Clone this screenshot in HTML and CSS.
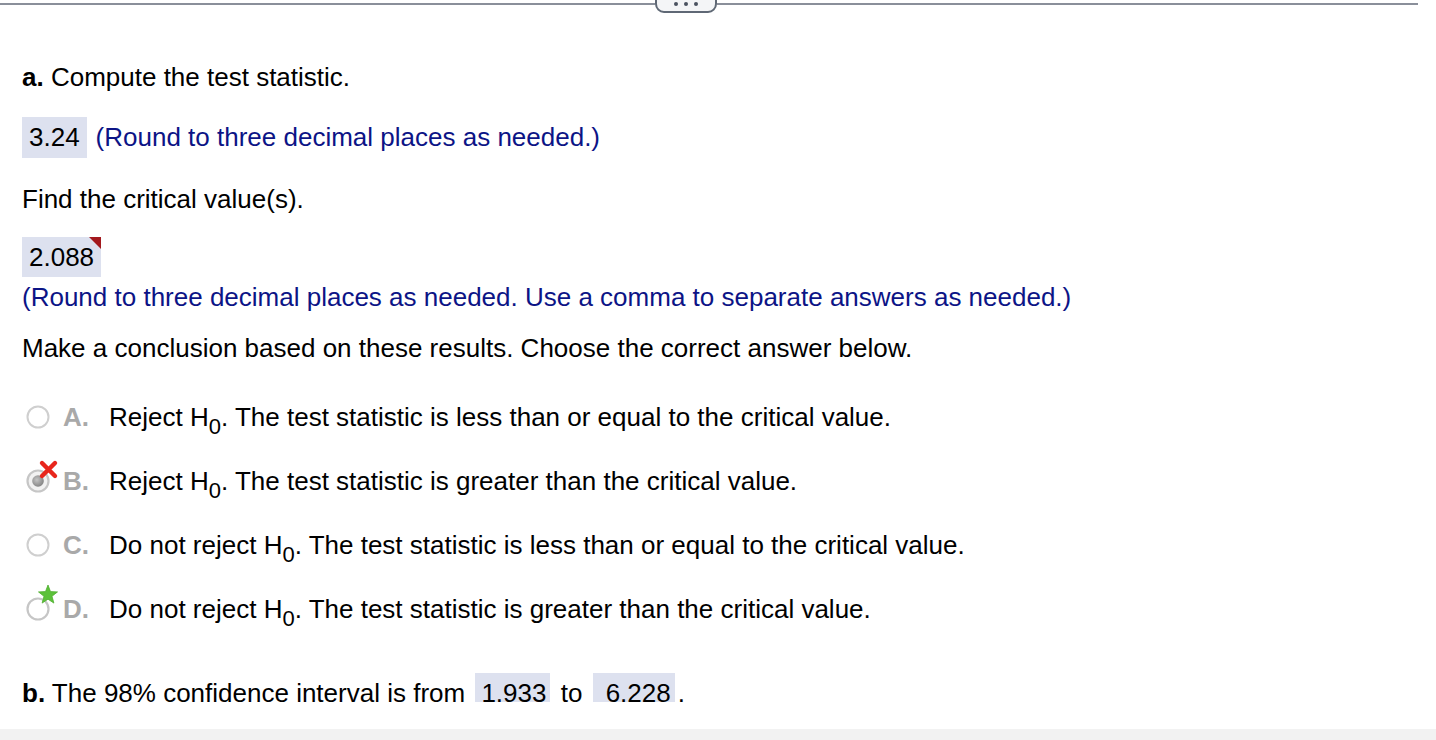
FILE: index.html
```html
<!DOCTYPE html>
<html>
<head>
<meta charset="utf-8">
<link rel="stylesheet" href="styles.css">
</head>
<body>
<div class="page">
  <div class="viewport">
    <div class="divider">
      <div class="rule rule-left"></div>
      <div class="pill"><span class="dot"></span><span class="dot"></span><span class="dot"></span></div>
      <div class="rule"></div>
    </div>
    <div class="content">
      <p class="row row-a"><b>a.</b> Compute the test statistic.</p>
      <div class="row row-ans1"><span class="ans">3.24</span><span class="hint">(Round to three decimal places as needed.)</span></div>
      <p class="row row-find">Find the critical value(s).</p>
      <div class="row row-ans2"><span class="ans ans-flag">2.088<span class="flag"></span></span></div>
      <p class="row row-hint2 hint">(Round to three decimal places as needed. Use a comma to separate answers as needed.)</p>
      <p class="row row-make">Make a conclusion based on these results. Choose the correct answer below.</p>
      <div class="options">
        <div class="option">
          <svg class="radio" width="36" height="64" viewBox="0 0 36 64">
            <circle cx="13" cy="32" r="10.5" fill="#fff" stroke="#cfcfcf" stroke-width="2"/>
          </svg>
          <span class="letter">A.</span>
          <span class="otext">Reject H<span class="sub">0</span>. The test statistic is less than or equal to the critical value.</span>
        </div>
        <div class="option">
          <svg class="radio" width="36" height="64" viewBox="0 0 36 64">
            <defs>
              <radialGradient id="dotg" cx="0.4" cy="0.4" r="0.7">
                <stop offset="0" stop-color="#c4c4c4"/>
                <stop offset="1" stop-color="#7c7c7c"/>
              </radialGradient>
            </defs>
            <circle cx="13" cy="32" r="10.5" fill="#f2f2f2" stroke="#c6c6c6" stroke-width="2.2"/>
            <circle cx="13" cy="32" r="5.8" fill="url(#dotg)"/>
            <path d="M17 14 L30 27 M30 14 L17 27" stroke="#e8261c" stroke-width="4.4" stroke-linecap="round"/>
          </svg>
          <span class="letter">B.</span>
          <span class="otext">Reject H<span class="sub">0</span>. The test statistic is greater than the critical value.</span>
        </div>
        <div class="option">
          <svg class="radio" width="36" height="64" viewBox="0 0 36 64">
            <circle cx="13" cy="32" r="10.5" fill="#fff" stroke="#cfcfcf" stroke-width="2"/>
          </svg>
          <span class="letter">C.</span>
          <span class="otext">Do not reject H<span class="sub">0</span>. The test statistic is less than or equal to the critical value.</span>
        </div>
        <div class="option">
          <svg class="radio" width="36" height="64" viewBox="0 0 36 64">
            <circle cx="13" cy="32" r="10.5" fill="#fff" stroke="#c6c6c6" stroke-width="2.2"/>
            <path d="M23 8 L25.47 14.6 L32.51 14.91 L26.99 19.3 L28.88 26.09 L23 22.2 L17.12 26.09 L19.01 19.3 L13.49 14.91 L20.53 14.6 Z" fill="#5cc13a" stroke="#4fae2f" stroke-width="0.8" stroke-linejoin="round"/>
          </svg>
          <span class="letter">D.</span>
          <span class="otext">Do not reject H<span class="sub">0</span>. The test statistic is greater than the critical value.</span>
        </div>
      </div>
      <p class="row row-b"><b>b.</b> The 98% confidence interval is from <span class="ans ans-inline">1.933</span> to <span class="ans ans-inline ans-wide">6.228</span>.</p>
    </div>
  </div>
  <div class="footer"></div>
</div>
</body>
</html>
```
FILE: styles.css
```css
html, body {
  margin: 0;
  padding: 0;
  background: #fff;
}
body {
  font-family: "Liberation Sans", Arial, Helvetica, sans-serif;
  font-size: 26px;
  color: #000;
}
.page {
  width: 1436px;
  height: 740px;
  display: flex;
  flex-direction: column;
}
.viewport {
  height: 702px;
  overflow: hidden;
}
.footer {
  margin-top: 27px;
  height: 11px;
  background: #f2f2f2;
}
.divider {
  display: flex;
  height: 13px;
  padding-right: 18px;
}
.rule {
  flex: 1;
  height: 2px;
  margin-top: 3px;
  background: #8a8f9a;
}
.rule-left {
  flex: none;
  width: 655px;
}
.pill {
  flex: none;
  width: 62px;
  height: 22px;
  margin-top: -9px;
  border: 2px solid #5f6875;
  border-radius: 9px;
  background: #f4f5f7;
  display: flex;
  justify-content: center;
  align-items: flex-end;
  gap: 6px;
  padding-bottom: 5px;
  box-sizing: border-box;
}
.dot {
  width: 4px;
  height: 4px;
  border-radius: 50%;
  background: #4a5260;
}
.content {
  padding-left: 22px;
}
.row {
  margin: 0;
}
p.row {
  line-height: 30px;
}
.row-a { margin-top: 49px; }
.row-ans1 { margin-top: 25px; display: flex; align-items: center; height: 41px; }
.row-find { margin-top: 26px; }
.row-ans2 { margin-top: 23px; height: 40px; display: flex; }
.row-hint2 { margin-top: 5px; }
.row-make { margin-top: 21px; }
.options { margin-top: 22px; }
p.row-b { margin-top: 32px; line-height: 40px; }

.ans {
  display: inline-block;
  background: #dde1ef;
  padding: 0 7px;
  line-height: 41px;
}
.ans-flag {
  position: relative;
  line-height: 40px;
}
.flag {
  position: absolute;
  top: 0;
  right: 0;
  width: 0;
  height: 0;
  border-top: 12px solid #a3191e;
  border-left: 12px solid transparent;
}
.hint {
  color: #0c1486;
}
.row-ans1 .hint {
  margin-left: 9px;
}
.option {
  display: flex;
  align-items: center;
  height: 64px;
}
.radio {
  display: block;
  margin-left: 3px;
  flex: none;
}
.letter {
  width: 46px;
  margin-left: 2px;
  font-weight: bold;
  color: #a9a9a9;
  flex: none;
}
.sub {
  font-size: 22px;
  vertical-align: -8px;
  line-height: 0;
}
.ans-inline {
  line-height: 40px;
  padding: 0 4px 0 6px;
  margin: 0 3px;
}
.ans-wide {
  padding-left: 13px;
}
```
